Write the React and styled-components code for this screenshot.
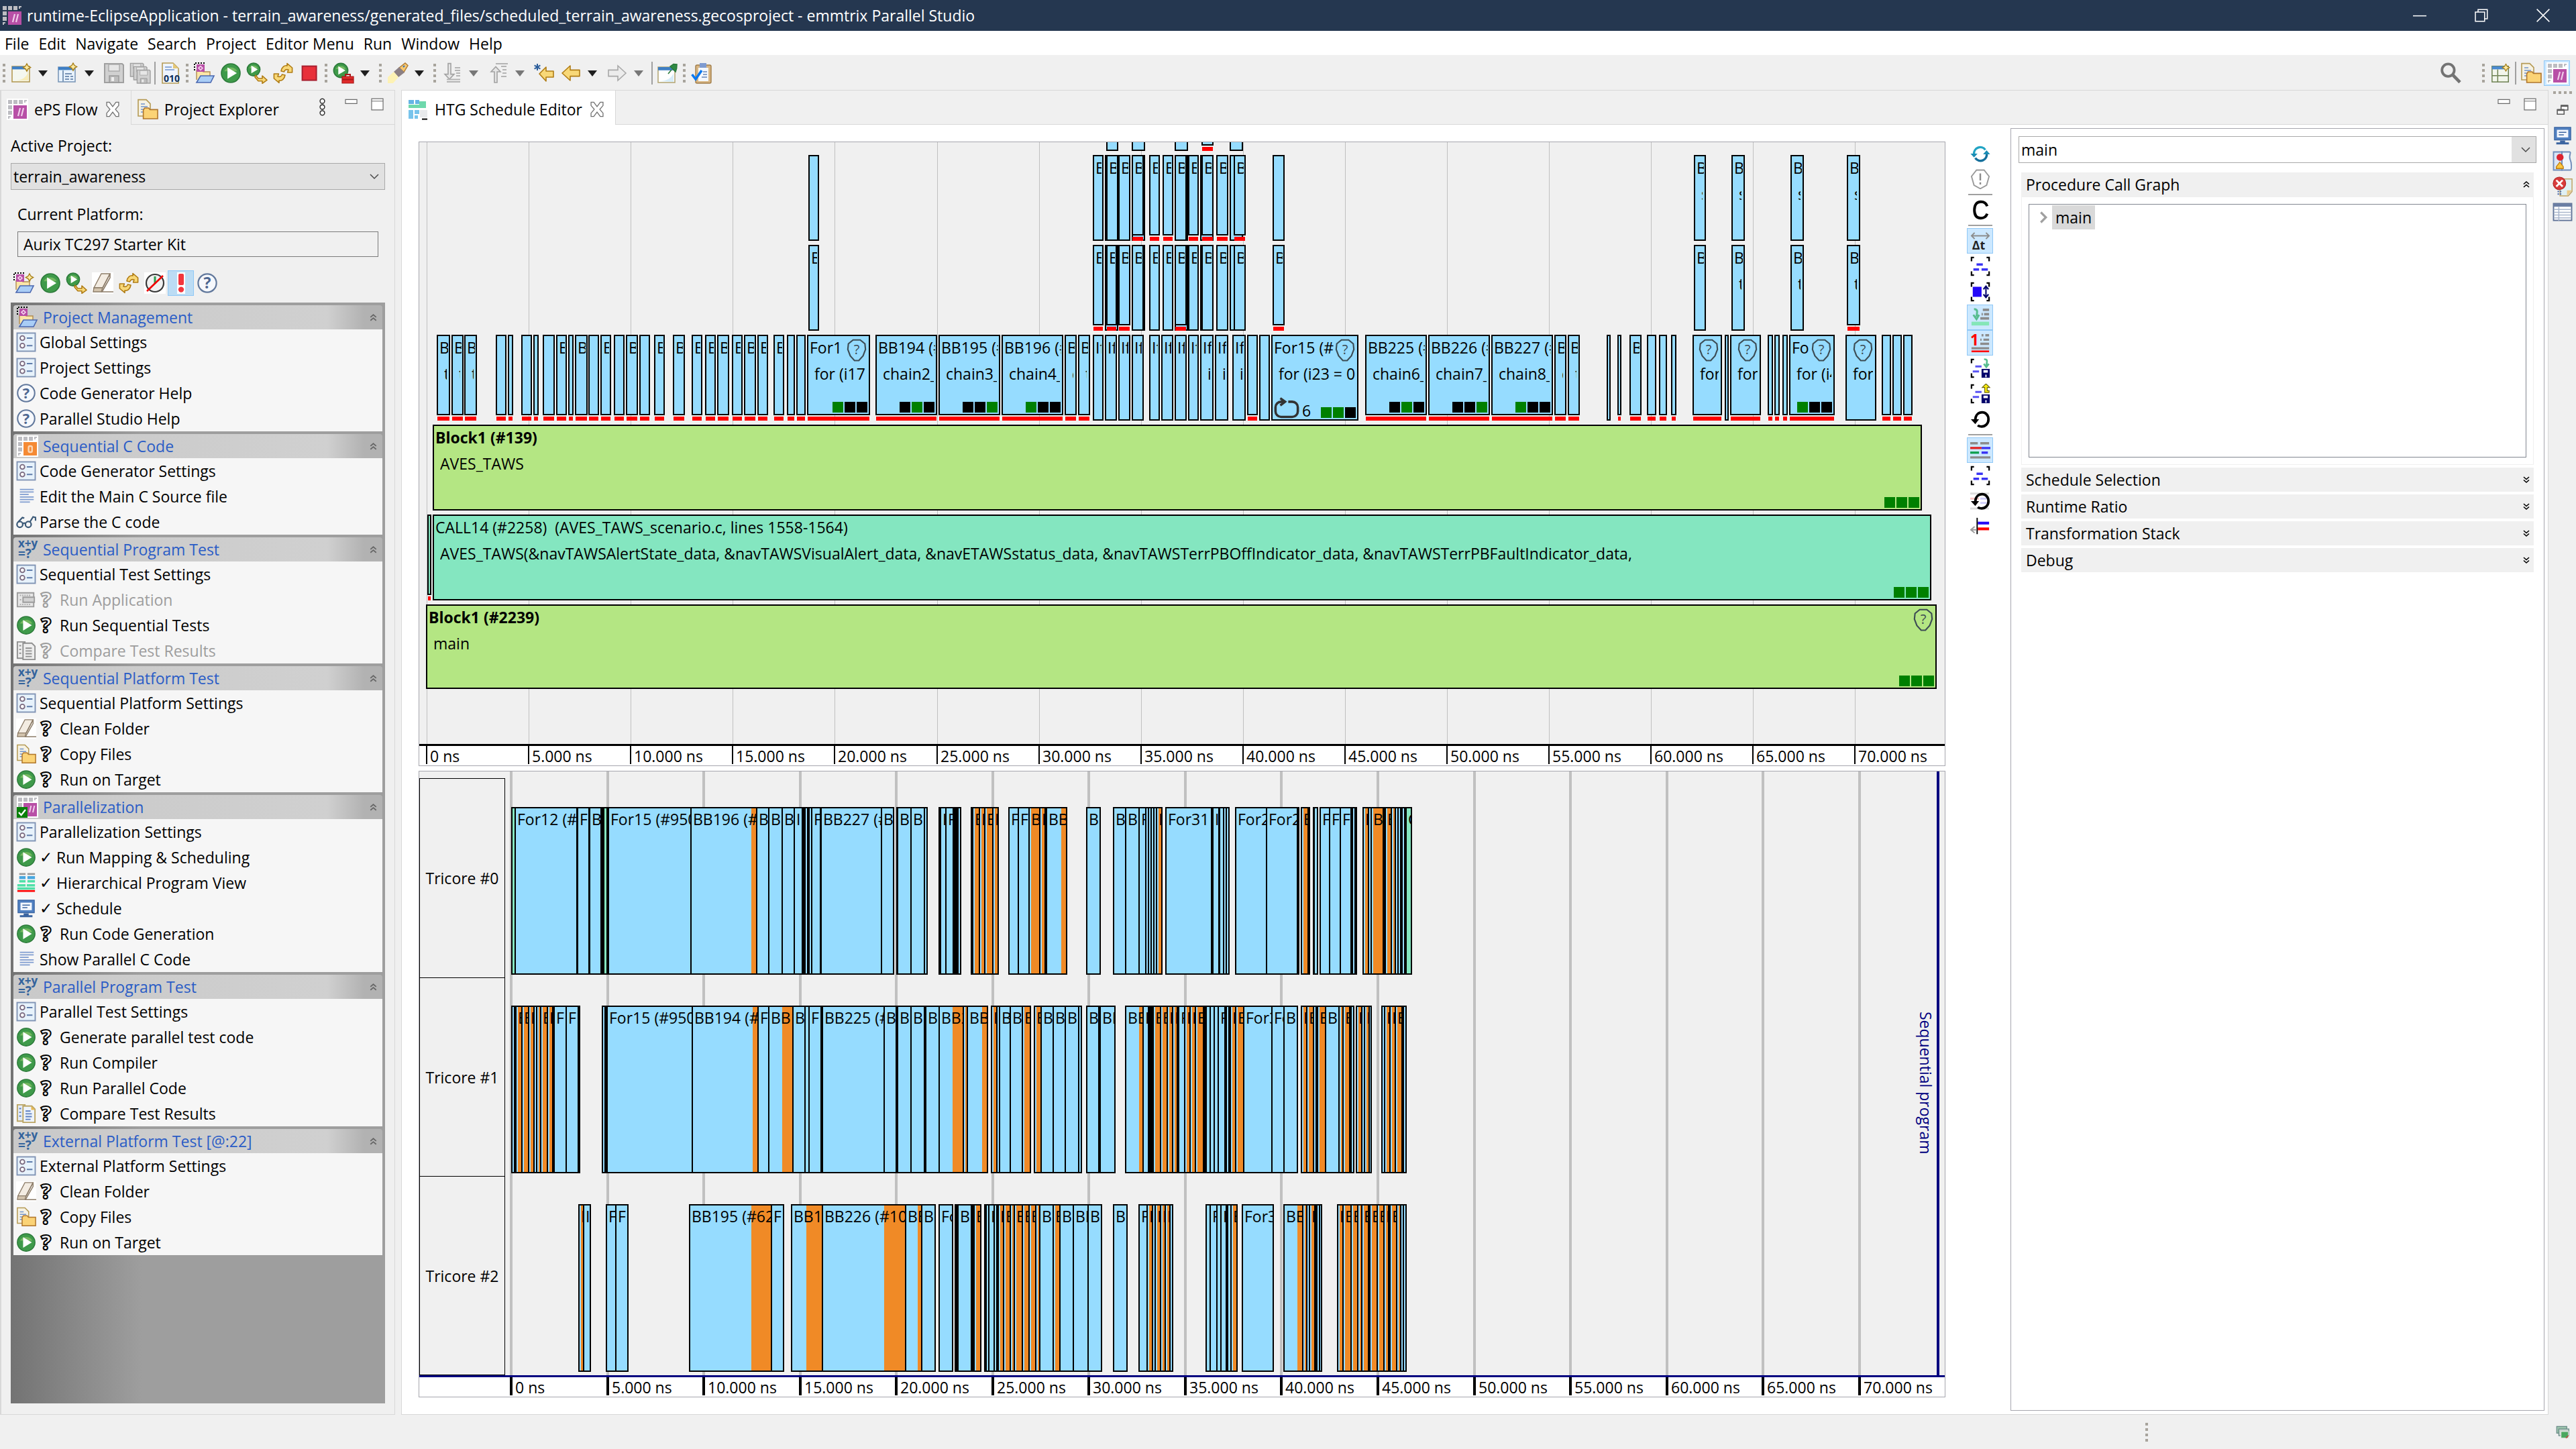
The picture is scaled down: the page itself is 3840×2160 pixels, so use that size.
import { useState } from "react";
import styled, { createGlobalStyle, css } from "styled-components";

const GlobalStyle = createGlobalStyle`
  *, *::before { box-sizing: border-box; }
  body {
    margin: 0;
    background: #f0f0f0;
    color: #000;
    font-family: "Open Sans", "Noto Sans", sans-serif;
    font-size: 23px;
    line-height: 32px;
  }
  button, input, select { font: inherit; color: inherit; }
  button { margin: 0; padding: 0; border: 0; background: none; text-align: left; }
  svg { display: block; flex: none; }
`;

/* ---------- icons, all drawn on a 16 x 16 grid ---------- */

const Spark = ({ x = 11, y = 0 }) => (
  <path
    d={`M${x + 2.5} ${y}l1 1.8 1.8 1-1.8 1-1 1.8-1-1.8-1.8-1 1.8-1z`}
    fill="#fbe9a0"
    stroke="#a8801c"
    strokeWidth=".7"
  />
);

const Brand = ({ color = "#b84fa6", back = "#fff" }) => (
  <>
    <rect width="16" height="16" fill={back} />
    <path d="M1 1h3v3H1zM5 1h3v3H5zM9 1h3v3H9zM13 1h2v1h-1v1h-1zM1 5h3v3H1zM1 9h3v3H1zM1 13h2v1H2v1H1z" fill="#bdbdc2" />
    <rect x="5" y="5" width="10" height="10" fill={color} />
  </>
);

const Play = ({ r = 7, cx = 8, cy = 8 }) => (
  <>
    <circle cx={cx} cy={cy} r={r} fill="#3f9a4a" stroke="#2c7a3a" strokeWidth=".8" />
    <path d={`M${cx - r * 0.7} ${cy - r * 0.2}a${r * 0.8} ${r * 0.8} 0 0 1 ${r * 1.4} 0z`} fill="#8cc46a" opacity=".7" />
    <path d={`M${cx - r * 0.35} ${cy - r * 0.6}L${cx + r * 0.65} ${cy}L${cx - r * 0.35} ${cy + r * 0.6}z`} fill="#fff" />
  </>
);

const Gold = ({ d }) => <path d={d} fill="#f8d878" stroke="#b07c14" strokeWidth=".8" strokeLinejoin="round" />;

const Disk = ({ x = 0, y = 0, s = 1 }) => (
  <g transform={`translate(${x} ${y}) scale(${s})`}>
    <path d="M1 1h13l1 1v13H1z" fill="#d0d0d0" stroke="#a0a0a0" />
    <path d="M4 1.5h8v5H4z" fill="#e6e6e6" stroke="#aaa" strokeWidth=".7" />
    <path d="M4.5 10h7v5h-7z" fill="#bdbdbd" stroke="#999" strokeWidth=".7" />
    <path d="M6 11h2v3H6z" fill="#eee" />
  </g>
);

const Folder = () => (
  <>
    <path d="M2 13V6h4l1 1h5v3" fill="#fbe6a8" stroke="#b08a50" strokeWidth=".7" />
    <path d="M2 15l3-5h10l-2.5 5z" fill="#a9cdf6" stroke="#4a67b0" strokeWidth=".8" />
  </>
);

const Tile = () => (
  <>
    <path d="M1 .5h8M.5 1v6" stroke="#000" strokeDasharray="1 1" />
    <rect x="2" y="1.5" width="6" height="5.5" fill="#b84fa6" />
    <path d="M3.5 4.2L5 2.8l1.5 1.4L5 5.7z" fill="none" stroke="#f4d0ee" strokeWidth=".8" />
  </>
);

const Brackets = () => (
  <path d="M1 4V1h2M13 1h2v3M1 12v3h2M13 15h2v-3" fill="none" stroke="#000" strokeWidth="1.2" />
);

const SmallDisk = () => (
  <>
    <path d="M9 8.5h6.5v7H9z" fill="#00006a" />
    <path d="M10.5 9.5H14v2h-3.5zM12 13h1v2h-1z" fill="#fff" />
  </>
);

const ICONS = {
  brand: (
    <>
      <Brand />
      <path d="M8.5 13L10 7M11 13l1.5-6" stroke="#f0cdea" strokeWidth="1.1" />
    </>
  ),
  brandDark: (
    <>
      <Brand back="none" />
      <path d="M8.5 13L10 7M11 13l1.5-6" stroke="#f0cdea" strokeWidth="1.1" />
    </>
  ),
  newWizard: (
    <>
      <rect x="1" y="3" width="13" height="11.5" fill="#f4f7ef" stroke="#b59a54" strokeWidth=".8" />
      <rect x="1" y="3" width="12" height="2.2" fill="#3f7fc4" />
      <path d="M3 13.5c5 0 9-2 10-7v7z" fill="#f7ecb8" />
      <Spark x={9.5} y={1} />
    </>
  ),
  newView: (
    <>
      <rect x="1" y="3.5" width="12.5" height="11" fill="#e8f2fc" stroke="#7c98b8" strokeWidth=".8" />
      <rect x="1" y="3.5" width="12" height="2.2" fill="#3f7fc4" />
      <path d="M4.5 6v8.5" stroke="#7c98b8" />
      <path d="M6 8.5h5M6 10.5h3M10 10.5h2M6 12.5h3M10 12.5h2" stroke="#50719c" strokeWidth=".8" />
      <Spark x={9.5} y={0.5} />
    </>
  ),
  save: <Disk />,
  saveAll: (
    <>
      <Disk s={0.7} />
      <Disk x={2.5} y={2.5} s={0.7} />
      <Disk x={5} y={5} s={0.7} />
    </>
  ),
  binary: (
    <>
      <path d="M2 .5h8l4 4v11H2z" fill="#eef4fc" stroke="#b59a54" strokeWidth=".8" />
      <path d="M10 .5v4h4z" fill="#e4c878" />
      <path d="M4 3.5h5M4 5.5h7" stroke="#7094cc" strokeWidth=".8" />
      <text x="3" y="14.5" fontSize="7" fontWeight="700" fill="#10305c">010</text>
    </>
  ),
  projectOpen: (
    <>
      <Folder />
      <Tile />
    </>
  ),
  projectNew: (
    <>
      <Folder />
      <Tile />
      <Spark x={9.5} y={1} />
    </>
  ),
  play: <Play />,
  playNext: (
    <>
      <Play r={4.8} cx={5.5} cy={5.3} />
      <Gold d="M7 9.5L9 12h3v-2l3.5 3.2-3.5 2.5v-1.8H9L6.5 11z" />
    </>
  ),
  sync: (
    <>
      <Gold d="M6.5 6.5C7 3.5 9 2 11 2.5V.8L14.8 4v3.5h-3.5L12 5.5C10.5 5 9 5.5 8.8 7z" />
      <Gold d="M9.5 9.5c-.5 3-2.5 4.5-4.5 4v1.7L1.2 12V8.5h3.5L4 10.5c1.5.5 3 0 3.200-1.500z" />
    </>
  ),
  stop: <rect x="2.8" y="2.8" width="10.5" height="10.5" fill="#e8303a" stroke="#a82030" />,
  playTool: (
    <>
      <Play r={5.3} cx={6} cy={6} />
      <path d="M7 10.5h8.5v5H7z" fill="#e02a2a" stroke="#a81818" strokeWidth=".6" />
      <path d="M9.5 10.5V9H13v1.5M7 12.8h8.5" fill="none" stroke="#a81818" />
    </>
  ),
  torch: (
    <>
      <path d="M9 4L13.5.5l2 1.8-3 5z" fill="#f7c870" stroke="#b07c34" strokeWidth=".7" />
      <path d="M5 7l4-3.5 4 4L8.500 11z" fill="#8c8084" />
      <path d="M.5 15.5V11L5 7l3.5 4-4 4.500z" fill="#fdf2b4" />
      <path d="M12 3.5l1-1" stroke="#2f6fc0" />
    </>
  ),
  nextMark: (
    <>
      <path d="M5 .8h2v8h2.5L6 12.5 2.5 8.8H5z" fill="#e6e6e6" stroke="#a2a2a2" strokeWidth=".8" />
      <path d="M10 4h4M10 6h4M11 8h3M11 10h3M4 14.5h10M4 12.8h10" stroke="#b4b4b4" />
    </>
  ),
  prevMark: (
    <>
      <path d="M5 15V7H2.5L6 3.2 9.5 7H7v8z" fill="#e6e6e6" stroke="#a2a2a2" strokeWidth=".8" />
      <path d="M6 1h9M10 3h4M11 5.5h3M11 8h3M10 10.5h4" stroke="#b4b4b4" />
    </>
  ),
  backStar: (
    <>
      <Gold d="M4 8.5l5-5v3h5.5V11H9v3z" />
      <path d="M2.5 1v5M.3 2.2l4.4 2.6M4.7 2.2L.3 4.8" stroke="#2d5f9c" />
    </>
  ),
  back: <Gold d="M1.5 8l6-5.5v3.2h7v4.6h-7v3.2z" />,
  forward: <path d="M14.5 8l-6-5.5v3.2h-7v4.6h7v3.2z" fill="#ececec" stroke="#a8a8a8" strokeWidth=".8" />,
  pin: (
    <>
      <rect x="1" y="3.5" width="12.5" height="11.5" fill="#fff" stroke="#b5a878" strokeWidth=".8" />
      <rect x="1" y="3.5" width="12.5" height="2.4" fill="#3f7fc4" />
      <path d="M2 14c5 0 9-2 10.5-6v6.5z" fill="#d6ecf8" />
      <path d="M8.5 8.5l2.5-3M10 3l4 4 .8-2.5L15 1.5l-2.5-.2z" fill="#2f8a44" stroke="#2a7a3a" strokeWidth=".8" />
    </>
  ),
  clipboard: (
    <>
      <rect x="3.5" y="2" width="11.5" height="13.5" rx="1" fill="#d8b684" stroke="#a07c48" strokeWidth=".7" />
      <path d="M5.5 4H13v10H5.5z" fill="#f4f8fe" />
      <rect x="6.5" y=".5" width="5" height="3.5" fill="#7f9bd0" />
      <path d="M9 7h3M9 9h3M8 11h4" stroke="#6484b8" strokeWidth=".8" />
      <path d="M.8 9l2.7 3.5L8 6" fill="none" stroke="#0a78f0" strokeWidth="1.8" />
    </>
  ),
  copyFiles: (
    <>
      <path d="M1 .8h6l3 3V13H1z" fill="#f6f2e4" stroke="#b59a54" strokeWidth=".8" />
      <path d="M3 4h3M3 6h5M3 8h3M3 10h2" stroke="#7094cc" strokeWidth=".8" />
      <path d="M4.8 8.5l1-1.5h3l1 1.2h5.7V15H4.8z" fill="#fbd376" stroke="#b0762c" strokeWidth=".8" />
    </>
  ),
  editor: (
    <>
      <path d="M1 1h4v3H1zM6 1h3v3H6z" fill="#64b4e4" />
      <path d="M1 4.5h13V7H1zM9 2h5v3H9z" fill="#6ed8ac" />
      <path d="M1 8.5h3.5V15H1zM5.5 8.5H9v3H5.5zM5.5 12.5H8V15H5.5z" fill="#78c4ec" />
      <path d="M9.5 8.5H15V14H9.5z" fill="#e8eaec" />
      <path d="M11 15.3h4" stroke="#000" />
    </>
  ),
  eraser: (
    <>
      <rect width="16" height="16" fill="#fff" />
      <path d="M7 1h6.5L8 11.5H1.5z" fill="#f3ece2" stroke="#8c7c68" strokeWidth=".7" />
      <path d="M1.5 11.5H8l-1 3H1z" fill="#d3c4ae" stroke="#8c7c68" strokeWidth=".7" />
      <path d="M8 11.5L13.5 1v3l-6 10.5H16" fill="none" stroke="#8c7c68" strokeWidth=".8" />
    </>
  ),
  noTimer: (
    <>
      <rect width="16" height="16" fill="#fff" />
      <circle cx="8" cy="8" r="6.5" fill="#f0f0f0" stroke="#383838" strokeWidth="1.1" />
      <path d="M8 3v5.5" stroke="#2f9c50" strokeWidth="1.5" />
      <path d="M2 14L14 2.5" stroke="#f00000" strokeWidth="1.3" />
    </>
  ),
  alert: (
    <>
      <rect x="5" width="6" height="16" fill="#fff" />
      <rect x="6" y="1" width="4" height="8.5" rx="1" fill="#f2363e" />
      <circle cx="8" cy="12.8" r="2.1" fill="#f2363e" />
    </>
  ),
  help: (
    <>
      <circle cx="8" cy="8" r="6.8" fill="#f6f8fc" stroke="#61789c" strokeWidth="1.1" />
      <text x="8" y="12.2" textAnchor="middle" fontSize="11.5" fontWeight="700" fill="#4d6690">?</text>
    </>
  ),
  settings: (
    <>
      <rect x=".8" y=".8" width="14.4" height="14.4" fill="#e7f2fb" stroke="#7f93b4" />
      <circle cx="5" cy="4.8" r="1.8" fill="#fff" stroke="#7a6a80" />
      <circle cx="5" cy="10.8" r="1.8" fill="#fff" stroke="#7a6a80" />
      <path d="M8.5 4.8H13M8.5 10.8H13" stroke="#5f7cab" />
    </>
  ),
  codeC: (
    <>
      <Brand color="#f58a34" />
      <rect x="8.8" y="8" width="2.6" height="4.5" rx="1" fill="none" stroke="#fbd6b4" strokeWidth="1.2" />
    </>
  ),
  source: <path d="M3 2.5h11M3 4.5h11M3 6.5h7M3 8.5h11M3 10.5h11M3 12.5h8" stroke="#7f9cd0" strokeWidth=".9" />,
  glasses: (
    <g fill="none" stroke="#3c5a78" strokeWidth="1.2">
      <circle cx="3" cy="10" r="2.3" />
      <circle cx="9.7" cy="10" r="2.3" />
      <path d="M5.400 9.500c.5-.8 1.500-.8 2 0M1.500 8.300L5 4.500l1.500.5M11 8l2.500-4 2 .5V7" />
    </g>
  ),
  formula: (
    <>
      <text x="1" y="6.5" fontSize="8.5" fontWeight="700" fill="#33639c">x+y</text>
      <text x="1" y="14.5" fontSize="9.5" fontWeight="700" fill="#33639c">=?</text>
    </>
  ),
  runOff: (
    <>
      <path d="M1 2.5h13v11H1z" fill="#e6e6e6" stroke="#9c9c9c" />
      <path d="M5.5 6h9v4h-9z" fill="#d2d2d2" stroke="#9c9c9c" />
      <path d="M3 4.5h9M3 8h1M3 11.8h9" stroke="#aaa" strokeDasharray="1 .8" />
    </>
  ),
  compareOff: (
    <>
      <path d="M1 1h6v13H1z" fill="#eee" stroke="#8f8f8f" />
      <path d="M5.5 2h7L15 4.5V15H5.5z" fill="#eee" stroke="#8f8f8f" />
      <path d="M7.5 6h5M7.5 8.2h5M7.5 10.4h5M7.5 12.6h5M2.5 4H4M2.5 7H4M2.5 10H4" stroke="#8f8f8f" />
    </>
  ),
  compare: (
    <>
      <path d="M1 1h6v13H1z" fill="#e4ecf8" stroke="#bba564" />
      <path d="M5.5 2h7L15 4.5V15H5.5z" fill="#eef4fc" stroke="#bba564" />
      <path d="M12 2v3h3z" fill="#e8b850" />
      <path d="M7.5 6h4M7.5 8.2h5M7.5 10.4h5M7.5 12.6h4M2.5 4H4M2.5 7H4M2.5 10H4" stroke="#5c7fc0" />
    </>
  ),
  parallel: (
    <>
      <Brand />
      <path d="M9.5 12l1.2-5M12 12l1.2-5" stroke="#f0cdea" />
      <rect y="8" width="8" height="8" fill="#0a800a" />
      <path d="M1.5 12l1.8 2 3.200-4" fill="none" stroke="#fff" strokeWidth="1.2" />
    </>
  ),
  hierarchy: (
    <>
      <path d="M2.5 1h5M9 1h6" stroke="#9a9a9a" strokeWidth="1.5" />
      <path d="M2.5 3.8h5M9 3.8h6" stroke="#4aa8e0" strokeWidth="2.4" />
      <path d="M2.5 6.8h5M9 6.8h6M1 10h6.5M8.5 10H15M1 12.5h14" stroke="#4fe0a8" strokeWidth="1.8" />
      <path d="M1 14.5h14" stroke="#f00" strokeWidth="1.4" />
    </>
  ),
  monitor: (
    <>
      <path d="M1.5 1.5h13v10h-13z" fill="#4f7fc0" stroke="#3a64a0" strokeWidth=".6" />
      <path d="M3.5 3.5h9v6h-9z" fill="#f4f8fe" />
      <path d="M5 5.5h6M5 7.5h4" stroke="#3a64a0" strokeWidth=".8" />
      <path d="M6 12h4v1.5h3V15H3v-1.5h3z" fill="#3a64a0" />
    </>
  ),
  refresh: (
    <>
      <path d="M3 8.5A5 5 0 0 1 12 5" fill="none" stroke="#22a4c4" strokeWidth="1.8" />
      <path d="M13 7.5A5 5 0 0 1 4 11.5" fill="none" stroke="#16709c" strokeWidth="1.8" />
      <path d="M.2 8h5.600L3 11zM10.2 8.5h5.600L13 5.300z" fill="#1a8cb4" />
    </>
  ),
  warning: (
    <>
      <path d="M5 .8h6l4 5-2 7-5 2.8-5-2.8-2-7z" fill="#fff" stroke="#9a9a9a" />
      <path d="M8 3.5V9M8 10.5v1.8" stroke="#8c8c8c" strokeWidth="1.3" />
    </>
  ),
  letterC: (
    <path
      d="M13.5 5c-1-2.7-2.7-3.5-5-3.5C5 1.5 3.3 4 3.3 8S5 14.5 8.5 14.5c2.3 0 4-.8 5-3.5"
      fill="none"
      stroke="#000"
      strokeWidth="2.1"
    />
  ),
  deltaT: (
    <>
      <path d="M1 4h14M3.5 1.5L1 4l2.5 2.5M12.5 1.5L15 4l-2.5 2.5" fill="none" stroke="#8c8c8c" />
      <text x="1.5" y="14.8" fontSize="9.5" fontWeight="700" fill="#222">Δt</text>
    </>
  ),
  fit: (
    <>
      <Brackets />
      <path d="M5 6.5h5M2.5 10.5H7M9 10.5h5" stroke="#3a34f4" strokeWidth="1.8" />
    </>
  ),
  fitHeight: (
    <>
      <Brackets />
      <rect x="2" y="4" width="7" height="8" fill="#2408f8" />
      <path d="M12.5 4v8M10.5 6l2-2.5 2 2.5M10.5 10l2 2.5 2-2.5" fill="none" stroke="#00006a" strokeWidth="1.1" />
    </>
  ),
  callLevel: (
    <>
      <path d="M3 1.5c4 0 2 4 2 6M2.5 6L5 9.5 7 6" fill="none" stroke="#58bd90" strokeWidth="1.6" />
      <path d="M10 2h5M9 5.5h1M11 5.5h4M8 8.8h7" stroke="#8c8c8c" strokeWidth="2" />
      <path d="M1 13h14" stroke="#84e6b8" strokeWidth="3" />
    </>
  ),
  oneLevel: (
    <>
      <text x="0" y="10" fontSize="12" fontWeight="700" fill="#f00">1</text>
      <path d="M9 2h1.5M12 2h3M8 5.5h1M10.5 5.5H15M8 8.8h7M1 12.3h14" stroke="#8c8c8c" strokeWidth="1.8" />
      <path d="M1 14.8h14" stroke="#f00" strokeWidth="1.4" />
    </>
  ),
  saveDown: (
    <>
      <path d="M1 4V1h2M1 12v3h2" fill="none" stroke="#000" strokeWidth="1.2" />
      <path d="M4 6.5h5M2 10.5h5" stroke="#5a54f4" strokeWidth="1.6" />
      <path d="M11 .8c4 0 1.5 3 2 5M10.8 4.5l2 2.5 2-2.5" fill="none" stroke="#58bd90" strokeWidth="1.4" />
      <SmallDisk />
    </>
  ),
  saveUp: (
    <>
      <path d="M1 4V1h2M1 12v3h2" fill="none" stroke="#000" strokeWidth="1.2" />
      <path d="M4 6.5h5M2 10.5h5" stroke="#5a54f4" strokeWidth="1.6" />
      <path d="M12.5 0l3 3h-2v2.5H15V7h-3.5V3h-2z" fill="#f8ec10" stroke="#6a6410" strokeWidth=".6" />
      <SmallDisk />
    </>
  ),
  undo: (
    <>
      <path
        d="M4 9c0-5 3-6.5 5.5-6.5s5 2 5 5.500-2.500 5.800-5.500 5.800c-1.500 0-2.500-.5-3-1"
        fill="none"
        stroke="#000"
        strokeWidth="2"
      />
      <path d="M.5 8H7l-3 3.8z" />
    </>
  ),
  tracks: (
    <>
      <path d="M0 2.5h6M8 2.5h7M0 13.8h16" stroke="#8c8c8c" strokeWidth="1.8" />
      <path d="M0 6.3h9" stroke="#e02828" strokeWidth="1.8" />
      <path d="M9 6.3h7M9 10h5" stroke="#3a34f4" strokeWidth="1.8" />
      <path d="M0 10h7" stroke="#10a050" strokeWidth="1.8" />
    </>
  ),
  undoTracks: (
    <>
      <path d="M0 2h15M0 13.8h15" stroke="#ddd" strokeWidth="1.6" />
      <path d="M0 6h7" stroke="#f8c4c4" strokeWidth="1.6" />
      <path d="M8 6h6M8 9.5h5" stroke="#cfcdfa" strokeWidth="1.6" />
      <path
        d="M4 9c0-5 3-6.5 5.5-6.5s5 2 5 5.500-2.500 5.800-5.500 5.800c-1.500 0-2.500-.5-3-1"
        fill="none"
        stroke="#000"
        strokeWidth="2"
      />
      <path d="M.5 8H7l-3 3.8z" />
    </>
  ),
  align: (
    <>
      <path d="M6 5.2h9" stroke="#2408f8" strokeWidth="2.2" />
      <path d="M6 9.8h9" stroke="#f00" strokeWidth="2.2" />
      <path d="M5.5 1v13" stroke="#000" />
      <path d="M5 10.5H1.5M3.5 8l-3 2.5 3 2.5" fill="none" stroke="#9a9a9a" />
    </>
  ),
  search: (
    <>
      <circle cx="6.2" cy="5.8" r="4.6" fill="none" stroke="#737373" strokeWidth="1.9" />
      <path d="M9.5 9.2l5.5 5.6" stroke="#737373" strokeWidth="2.4" />
    </>
  ),
  perspective: (
    <>
      <rect x="1" y="2.5" width="13" height="12.5" fill="#f3f6ec" stroke="#6c8050" strokeWidth=".8" />
      <rect x="1" y="2.5" width="11" height="2.5" fill="#4a8ad0" />
      <path d="M5.5 5v10M5.5 10H14M1 10h4" stroke="#6c8050" strokeWidth=".8" />
      <Spark x={9.5} y={0.8} />
    </>
  ),
  restore: (
    <>
      <path d="M6 2h9v6H6z" fill="#fff" stroke="#5c5c5c" strokeWidth="1.4" />
      <path d="M6 2.5h9" stroke="#5c5c5c" strokeWidth="2.4" />
      <path d="M1 7.500h9v6H1z" fill="#fff" stroke="#5c5c5c" strokeWidth="1.4" />
      <path d="M1 8h9" stroke="#5c5c5c" strokeWidth="2.4" />
    </>
  ),
  marks: (
    <>
      <path d="M.8.8h6.700v14.400H.8z" fill="#dbe6f6" stroke="#6f8cba" />
      <path d="M7.5.8h6c2 0-1 3 .5 6s1 8 .5 8.400h-7z" fill="#eef4fc" stroke="#6f8cba" />
      <circle cx="6" cy="5" r="2.8" fill="#dc2430" />
      <path d="M3 14v-1.5L5.8 9l2.8 3.5V14z" fill="#fbc840" stroke="#c07c10" strokeWidth=".7" />
    </>
  ),
  problems: (
    <>
      <path d="M6 2h9.5v10l-3 3.5H6z" fill="#dff0f4" stroke="#c0a464" strokeWidth=".8" />
      <path d="M15.5 11h-4v4.5z" fill="#eccb88" />
      <circle cx="5.5" cy="5.5" r="5" fill="#d83c3c" stroke="#b02424" strokeWidth=".6" />
      <path d="M3 3l5 5M8 3L3 8" stroke="#fff" strokeWidth="1.5" />
      <path d="M4 12h3M4 14h3" stroke="#4a6aa8" strokeDasharray="1.2 .6" />
    </>
  ),
  table: (
    <>
      <rect x=".8" y="1.3" width="14.4" height="13.4" fill="#fff" stroke="#5f7296" />
      <rect x=".8" y="1.3" width="14.4" height="2.5" fill="#6b7fa4" />
      <path d="M1 6h14M1 8.2h14M1 10.4h14M1 12.6h14M5 4v11" stroke="#a9b6cc" strokeWidth=".8" />
    </>
  ),
  layers: (
    <>
      <path d="M1 1h12v8H1z" fill="#9cc4ac" stroke="#6a8c88" />
      <path d="M3.5 4h12v8h-12z" fill="#c6d4cc" stroke="#6a8c88" />
      <path d="M6 7h9v8H6z" fill="#4ca860" stroke="#e8e8e8" />
      <path d="M12 15l3-3" stroke="#d04040" />
    </>
  ),
  close: (
    <path
      d="M2.500 1.500h2.500l3 4 3-4h2.500v3L10.500 8l3 3.500v3H11l-3-4-3 4H2.500v-3L5.500 8l-3-3.500z"
      fill="#fff"
      stroke="#707070"
      strokeWidth=".8"
    />
  ),
  minimize: <path d="M.8 2h14.400v5H.8z" fill="#fff" stroke="#6c6c6c" />,
  maximize: <path d="M.8 1h14.400v14H.8zM.8 4h14.400" fill="#fff" stroke="#6c6c6c" />,
  more: (
    <g fill="#fff" stroke="#333" strokeWidth=".9">
      <circle cx="8" cy="2.8" r="2" />
      <circle cx="8" cy="8" r="2" />
      <circle cx="8" cy="13.2" r="2" />
    </g>
  ),
  chevron: <path d="M2 5l6 6 6-6" fill="none" stroke="#4a4a4a" strokeWidth="1.5" />,
  chevronRight: <path d="M5 2l6 6-6 6" fill="none" stroke="#a0a0a0" strokeWidth="2.6" />,
  foldUp: <path d="M4 7.5L8 4l4 3.5M4 12l4-3.5 4 3.5" fill="none" stroke="currentColor" strokeWidth="1.6" />,
  foldDown: <path d="M4 4l4 3.5L12 4M4 8.5L8 12l4-3.5" fill="none" stroke="currentColor" strokeWidth="1.6" />,
  winMin: <path d="M0 8.5h16" stroke="#fff" strokeWidth="1.2" />,
  winRestore: <path d="M.8 4h11v11h-11zM4 4V1h11v11h-3" fill="none" stroke="#fff" strokeWidth="1.2" />,
  winClose: <path d="M.5.5l15 15M15.5.5l-15 15" stroke="#fff" strokeWidth="1.2" />,
  loop: (
    <path
      d="M6 5H4.500A3.500 3.500 0 0 0 1 8.500V11A3.500 3.500 0 0 0 4.500 14.500h7A3.500 3.500 0 0 0 15 11V8.500A3.500 3.500 0 0 0 11.500 5H9M4 2.800L7 5 4 7.300"
      fill="none"
      stroke="#333"
      strokeWidth="1.5"
    />
  ),
  unknown: (
    <>
      <path
        d="M5.500.8h5l3.300 2.700.4 4-1.700 4.500L9.500 15.300h-3L3.500 12 1.800 7.500l.4-4z"
        fill="none"
        stroke="#3c4c54"
        strokeWidth="1"
      />
      <text x="8" y="11" textAnchor="middle" fontSize="9.5" fill="#3c4c54">?</text>
    </>
  ),
};

function Icon({ name, size = 32, height }) {
  return (
    <svg width={size} height={height || size} viewBox="0 0 16 16" aria-hidden="true">
      {ICONS[name]}
    </svg>
  );
}

/* ---------- window frame ---------- */

const Window = styled.div`
  min-height: 100vh;
  display: flex;
  flex-direction: column;
`;

const TitleBar = styled.header`
  display: flex;
  align-items: center;
  gap: 6px;
  height: 46px;
  padding: 0 39px 0 2px;
  background: #253750;
  color: #fff;
`;

const Title = styled.h1`
  flex: 1;
  margin: 0;
  font-size: 23px;
  font-weight: 400;
`;

const WindowButton = styled.button`
  width: 86px;
  display: flex;
  justify-content: flex-end;
`;

const MenuBar = styled.nav`
  display: flex;
  gap: 14px;
  height: 36px;
  padding: 3px 7px 1px;
  background: #fff;
`;

const ToolBar = styled.div`
  display: flex;
  align-items: center;
  height: 52px;
  padding-top: 2px;
  padding-right: 9px;
`;

const ToolButton = styled.button`
  width: 39px;
  height: 38px;
  display: flex;
  align-items: center;
  justify-content: center;
  border: 1px solid ${(p) => (p.$on ? "#90c8f6" : "transparent")};
  background: ${(p) => (p.$on ? p.$tint || "#cce8ff" : "none")};
`;

const Caret = styled.button`
  width: 30px;
  padding-left: 6px;
  &::before {
    content: "";
    display: block;
    width: 14px;
    border: 7px solid transparent;
    border-top: 9px solid ${(p) => (p.$off ? "#777" : "#1e1e1e")};
    border-bottom: 0;
  }
`;

const Grip = styled.span`
  width: 4px;
  height: 28px;
  margin: 0 4px;
  background: repeating-linear-gradient(#a8a49c 0 4px, transparent 4px 8px);
`;

const Divider = styled.span`
  width: 2px;
  height: 34px;
  margin: 0 2px;
  background: #a0a0a0;
`;

const Spacer = styled.span`
  flex: 1;
`;

const SearchButton = styled(ToolButton)`
  margin-right: 24px;
`;

const Body = styled.div`
  flex: 1;
  display: flex;
`;

const StatusBar = styled.footer`
  display: flex;
  align-items: center;
  justify-content: flex-end;
  height: 53px;
  padding-right: 10px;
  border-bottom: 2px solid #4c4c4c;
  gap: 604px;
`;

/* ---------- left view ---------- */

const FlowView = styled.aside`
  width: 589px;
  flex: none;
  display: flex;
  flex-direction: column;
  margin-right: 9px;
  border: 1px solid #d8d8d8;
  border-left-width: 2px;
`;

const TabRow = styled.div`
  display: flex;
  height: 51px;
`;

const Tab = styled.button`
  display: flex;
  align-items: center;
  gap: 9px;
  padding: 5px 14px 0 8px;
  background: ${(p) => p.$bg || "none"};
`;

const TabRest = styled.div`
  flex: 1;
  display: flex;
  justify-content: ${(p) => (p.$right ? "flex-end" : "space-between")};
  border-bottom: 1px solid #d8d8d8;
  border-left: 1px solid #d8d8d8;
  background: #f0f0f0;
`;

const ViewButtons = styled.div`
  display: flex;
  align-items: flex-start;
  gap: 20px;
  padding: 11px ${(p) => p.$end || 16}px 0 0;
`;

const FlowForm = styled.form`
  flex: 1;
  display: flex;
  flex-direction: column;
  padding: 15px 14px 16px;
`;

const FieldLabel = styled.label`
  display: block;
  height: 42px;
  ${(p) => p.$indent && "margin-top: 20px; padding-left: 10px;"}
`;

const SelectBox = styled.div`
  display: grid;
  align-items: center;
  > * { grid-area: 1 / 1; }
  > svg { justify-self: end; margin-right: 8px; pointer-events: none; }
`;

const Select = styled.select`
  appearance: none;
  width: 100%;
  height: 40px;
  padding: 0 3px;
  border: 1px solid #a9a9a9;
  border-radius: 0;
  background: ${(p) => p.$bg};
`;

const PlatformInput = styled.input`
  height: 38px;
  margin: 0 10px 20px;
  padding: 0 8px;
  border: 1px solid #7a7a7a;
  background: #f0f0f0;
`;

const FlowTools = styled.div`
  display: flex;
  height: 48px;
`;

const FlowList = styled.div`
  flex: 1;
  display: flex;
  flex-direction: column;
  gap: 4px;
  padding: 4px;
  background: linear-gradient(90deg, #737373, #9e9e9e 35%);
`;

const SectionHead = styled.button`
  width: 100%;
  height: 36px;
  display: flex;
  align-items: center;
  gap: 7px;
  padding: 0 5px;
  border-radius: 4px 4px 0 0;
  background: linear-gradient(90deg, #c9c9c9, #d0d0d0 85%, #b2b2b2 95%);
  color: #2a5cc6;
  > svg:last-child { margin-left: auto; color: #666; }
`;

const FlowItem = styled.button`
  width: 100%;
  height: 38px;
  display: flex;
  align-items: center;
  gap: 5px;
  padding: 0 4px;
  background: #f6f6f6;
  color: ${(p) => (p.disabled ? "#9d9d9d" : "#000")};
`;

const Mark = styled.span`
  width: ${(p) => (p.$open ? 25 : 20)}px;
  padding-left: ${(p) => (p.$open ? 2 : 0)}px;
  font-family: ${(p) => (p.$open ? '"Open Sans", sans-serif' : '"DejaVu Sans", sans-serif')};
  ${(p) =>
    p.$open &&
    css`
      color: #f6f6f6;
      font-weight: 800;
      font-size: 30px;
      -webkit-text-stroke: 2px ${p.$off ? "#9d9d9d" : "#000"};
    `}
`;

/* ---------- editor ---------- */

const Editor = styled.main`
  flex: 1;
  min-width: 0;
  display: flex;
  flex-direction: column;
  border: 1px solid #d8d8d8;
  background: #fff;
`;

const EditorBody = styled.div`
  flex: 1;
  display: flex;
  padding: 5px 5px 5px 25px;
`;

const Charts = styled.div`
  flex: 1;
  min-width: 0;
  display: flex;
  flex-direction: column;
  gap: 7px;
  padding: 20px 0;
`;

const ChartFrame = styled.section`
  overflow: hidden;
  border: 1px solid #a6a6ae;
  ${(p) => p.$grow && "flex: 1; display: flex; flex-direction: column;"}
`;

const Canvas = styled.div`
  position: relative;
  overflow: hidden;
  background: #f0f0f0;
  ${(p) => (p.$height ? `height: ${p.$height}px;` : "flex: 1;")}
  border-bottom: 3px solid ${(p) => p.$line};
`;

const GridLine = styled.i`
  position: absolute;
  top: 0;
  bottom: 0;
  width: ${(p) => p.$w}px;
  background: #c0c0c0;
`;

const Axis = styled.div`
  position: relative;
  height: 29px;
  background: #fff;
`;

const Tick = styled.span`
  position: absolute;
  top: 0;
  height: 27px;
  padding-left: 4px;
  border-left: ${(p) => p.$w}px solid #000;
  line-height: 31px;
  white-space: nowrap;
`;

const FILL = { b: "#96dcff", g: "#b4e683", t: "#84e6c0", k: "#000" };

const Block = styled.div`
  position: absolute;
  overflow: hidden;
  border: 2px solid #000;
  background: ${(p) => FILL[p.$fill || "b"]};
  white-space: pre;
`;

const BlockText = styled.p`
  position: relative;
  margin: 0 1px 0 2px;
  overflow: hidden;
  line-height: ${(p) => (p.$sub ? 40 : 34)}px;
  font-weight: ${(p) => (p.$bold ? 700 : 400)};
  ${(p) => p.$sub && "margin: 2px 3px 0 9px;"}
`;

const TaskText = styled.p`
  position: relative;
  margin: 0 0 0 2px;
  line-height: 32px;
`;

const RedBar = styled.i`
  position: absolute;
  height: 6px;
  background: #f00;
`;

const Orange = styled.i`
  position: absolute;
  top: 0;
  bottom: 0;
  background: #f08a26;
`;

const Cores = styled.span`
  position: absolute;
  right: 2px;
  bottom: 2px;
  display: flex;
  gap: 2px;
`;

const Core = styled.i`
  width: 16px;
  height: 16px;
  background: ${(p) => (p.$on ? "#008000" : "#000")};
`;

const Badge = styled.span`
  position: absolute;
  top: 4px;
  right: 1px;
  background: ${(p) => FILL[p.$fill || "b"]};
`;

const LoopCount = styled.span`
  position: absolute;
  left: 2px;
  bottom: 0;
  display: flex;
  align-items: flex-end;
  gap: 4px;
  line-height: 26px;
`;

const CoreLabels = styled.div`
  position: relative;
  width: 128px;
  margin-top: 10px;
  border: 1px solid #000;
`;

const CoreLabel = styled.div`
  height: 296px;
  display: flex;
  align-items: center;
  justify-content: center;
  & + & { border-top: 1px solid #000; }
`;

const Deadline = styled.div`
  position: absolute;
  top: 0;
  bottom: 0;
  right: 8px;
  padding-top: 28px;
  border-right: 4px solid #000080;
  color: #000080;
  text-align: center;
  writing-mode: vertical-rl;
`;

const SideTools = styled.div`
  width: 97px;
  flex: none;
  display: flex;
  flex-direction: column;
  align-items: center;
  padding: 19px 0 0 6px;
`;

const Rule = styled.hr`
  width: 36px;
  height: 2px;
  margin: 3px 0;
  border: 0;
  background: #a0a0a0;
`;

const Inspector = styled.aside`
  width: 796px;
  flex: none;
  padding: 11px;
  border: 1px solid #a6a6ae;
`;

const Groups = styled.div`
  display: flex;
  flex-direction: column;
  gap: 4px;
  padding: 14px 4px;
`;

const GroupHead = styled.button`
  width: 100%;
  height: 36px;
  display: flex;
  align-items: center;
  justify-content: space-between;
  padding: 0 3px 0 7px;
  background: #f0f0f0;
`;

const GroupBody = styled.div`
  padding: 10px;
  border: 1px solid #f0f0f0;
`;

const Tree = styled.div`
  height: 378px;
  padding: 1px 11px;
  border: 1px solid #828790;
`;

const TreeNode = styled.button`
  height: 36px;
  display: flex;
  align-items: center;
  gap: 3px;
  > span { padding: 2px 5px; background: #d9d9d9; }
`;

const Trim = styled.div`
  width: 41px;
  flex: none;
  display: flex;
  flex-direction: column;
  align-items: center;
`;

const TrimGrip = styled.span`
  width: 28px;
  height: 4px;
  margin: 2px 0 5px;
  background: repeating-linear-gradient(90deg, #a8a49c 0 4px, transparent 4px 8px);
`;

/* ---------- data ---------- */

const MENU = ["File", "Edit", "Navigate", "Search", "Project", "Editor Menu", "Run", "Window", "Help"];

// "|" is a grip, "/" a divider, "v" a drop-down arrow, "w" a disabled one
const TOOLS = [
  "|", "newWizard", "v", "newView", "v", "save", "saveAll", "/", "binary",
  "|", "projectOpen", "play", "playNext", "sync", "stop",
  "|", "playTool", "v", "|", "torch", "v",
  "|", "nextMark", "w", "prevMark", "w", "backStar", "back", "v", "forward", "w", "/", "pin",
  "|", "clipboard",
];

const FLOW_TOOLS = ["projectNew", "play", "playNext", "eraser", "sync", "noTimer", "alert", "help"];

// item: [icon, label, mark, disabled]
const FLOW = [
  ["projectOpen", "Project Management", [
    ["settings", "Global Settings"],
    ["settings", "Project Settings"],
    ["help", "Code Generator Help"],
    ["help", "Parallel Studio Help"],
  ]],
  ["codeC", "Sequential C Code", [
    ["settings", "Code Generator Settings"],
    ["source", "Edit the Main C Source file"],
    ["glasses", "Parse the C code"],
  ]],
  ["formula", "Sequential Program Test", [
    ["settings", "Sequential Test Settings"],
    ["runOff", "Run Application", "?", true],
    ["play", "Run Sequential Tests", "?"],
    ["compareOff", "Compare Test Results", "?", true],
  ]],
  ["formula", "Sequential Platform Test", [
    ["settings", "Sequential Platform Settings"],
    ["eraser", "Clean Folder", "?"],
    ["copyFiles", "Copy Files", "?"],
    ["play", "Run on Target", "?"],
  ]],
  ["parallel", "Parallelization", [
    ["settings", "Parallelization Settings"],
    ["play", "Run Mapping & Scheduling", "✓"],
    ["hierarchy", "Hierarchical Program View", "✓"],
    ["monitor", "Schedule", "✓"],
    ["play", "Run Code Generation", "?"],
    ["source", "Show Parallel C Code"],
  ]],
  ["formula", "Parallel Program Test", [
    ["settings", "Parallel Test Settings"],
    ["play", "Generate parallel test code", "?"],
    ["play", "Run Compiler", "?"],
    ["play", "Run Parallel Code", "?"],
    ["compare", "Compare Test Results", "?"],
  ]],
  ["formula", "External Platform Test [@:22]", [
    ["settings", "External Platform Settings"],
    ["eraser", "Clean Folder", "?"],
    ["copyFiles", "Copy Files", "?"],
    ["play", "Run on Target", "?"],
  ]],
];

const SIDE_TOOLS = [
  "refresh", "warning", "-", "letterC", "-", "deltaT*", "fit", "fitHeight", "callLevel*",
  "oneLevel*", "saveDown", "saveUp", "undo", "-", "tracks*", "fit", "undoTracks", "align",
];

const LABELS = Array.from({ length: 15 }, (_, i) => (i ? `${i * 5}.000 ns` : "0 ns"));

// Scroll offset of both canvases.
const X0 = 625;
const LEVEL = [-115, 19, 153, 287];

// [left, right, first line, second line, "r" when a red bar lies under it, cores, badge, loop]
const L3 = [
  [651, 671, "B", "t", "r"], [673, 691, "B", "t", "r"], [692, 711, "B", "t", "r"], [739, 755, "", "", "r"],
  [757, 765, "", "", "r"], [777, 793, "", "", "r"], [795, 803, "", "", "r"], [809, 827, "", "", "r"],
  [829, 845, "B", "", "r"], [847, 855, "", "", "r"], [857, 876, "B", "", "r"], [877, 893, "", "", "r"],
  [895, 911, "B", "", "r"], [915, 931, "", "", "r"], [933, 951, "B", "", "r"], [953, 969, "", "", "r"],
  [975, 991, "B", "", "r"], [1003, 1021, "B", "", "r"], [1031, 1047, "B", "", "r"], [1051, 1067, "B", "", "r"],
  [1069, 1087, "B", "", "r"], [1091, 1107, "B", "", "r"], [1109, 1127, "B", "", "r"], [1129, 1145, "B", "", "r"],
  [1153, 1169, "B", "", "r"], [1173, 1185, "", "", "r"], [1187, 1201, "", "", "r"],
  [1203, 1297, "For1", "for (i17", "r", "100", 1], [1305, 1397, "BB194 (#", "chain2_", "r", "010"],
  [1399, 1491, "BB195 (#", "chain3_", "r", "001"], [1493, 1585, "BB196 (#", "chain4_", "r", "100"],
  [1587, 1605, "B", "c", "r"], [1607, 1625, "B", "t", "r"],
  [1629, 1645, "If", ""], [1647, 1665, "If", ""], [1667, 1685, "If", ""], [1687, 1705, "If", ""],
  [1713, 1729, "If", ""], [1731, 1749, "If", ""], [1751, 1769, "If", ""], [1771, 1787, "If", ""],
  [1789, 1809, "If", "i"], [1811, 1831, "If", "i"], [1837, 1857, "If", "i"],
  [1859, 1875, "", "", "r"], [1877, 1893, "", ""],
  [1895, 2025, "For15 (#", "for (i23 = 0", "", "110", 1, "6"],
  [2035, 2127, "BB225 (#", "chain6_", "r", "010"], [2129, 2221, "BB226 (#", "chain7_", "r", "001"],
  [2223, 2315, "BB227 (#", "chain8_", "r", "100"], [2317, 2335, "B", "c", "r"], [2337, 2355, "B", "t", "r"],
  [2395, 2401, "", ""], [2411, 2417, "", "", "r"], [2429, 2447, "B", "", "r"], [2455, 2469, "", "", "r"],
  [2473, 2485, "", "", "r"], [2491, 2499, "", "", "r"], [2523, 2567, "", "for", "r", "", 1],
  [2571, 2577, "", ""], [2579, 2625, "", "for", "r", "", 1], [2635, 2643, "", "", "r"],
  [2645, 2653, "", "", "r"], [2657, 2665, "", "", "r"], [2667, 2735, "Fo", "for (i4", "r", "100", 1],
  [2751, 2797, "", "for", "", "", 1], [2805, 2819, "", "", "r"], [2821, 2835, "", "", "r"], [2837, 2851, "", "", "r"],
];

const L2 = [
  [1205, 1221, "B", ""], [1629, 1645, "B", "", "r"], [1647, 1667, "", ""], [1649, 1665, "B", "", "r"],
  [1667, 1685, "B", "", "r"], [1687, 1707, "", ""], [1687, 1705, "B", ""], [1713, 1729, "B", ""],
  [1733, 1749, "B", ""], [1751, 1771, "", ""], [1751, 1769, "B", "", "r"], [1771, 1787, "B", ""],
  [1789, 1809, "", ""], [1791, 1809, "B", ""], [1813, 1831, "B", ""], [1833, 1857, "", ""],
  [1839, 1857, "B", ""], [1897, 1915, "B", "", "r"], [2525, 2543, "B", ""], [2581, 2601, "B", "t"],
  [2669, 2689, "B", "t"], [2753, 2773, "B", "t", "r"],
];

const L1 = [
  [1205, 1221, "", ""], [1629, 1645, "B", ""], [1647, 1667, "", ""], [1649, 1667, "B", ""],
  [1667, 1685, "B", ""], [1687, 1707, "", ""], [1687, 1705, "B", "", "r"], [1713, 1729, "B", "", "r"],
  [1733, 1749, "B", "", "r"], [1751, 1771, "", ""], [1751, 1769, "B", ""], [1771, 1787, "B", "", "r"],
  [1789, 1809, "", ""], [1791, 1809, "B", "", "r"], [1813, 1831, "B", "", "r"], [1833, 1853, "", ""],
  [1839, 1857, "B", "", "r"], [1897, 1915, "", ""], [2525, 2543, "B", "s"], [2581, 2601, "B", "s"],
  [2669, 2689, "B", "s"], [2753, 2773, "B", "s"],
];

const L0 = [
  [1649, 1667, "", ""], [1687, 1707, "", ""], [1751, 1771, "", ""], [1791, 1809, "", "", "r"], [1833, 1853, "", ""],
];

// [left, right, label, kind or start of the waiting part, its end]; kind "o" waits for its whole length
const SCHEDULE = [
  [
    [762, 769, "", "t"], [767, 861, "For12 (#"], [860, 879, "F"], [878, 897, "B"], [895, 901, "", "k"],
    [899, 906, "", "t"], [904, 908, "", "k"], [906, 1031, "For15 (#950"], [1029, 1129, "BB196 (#6", 1120, 1127],
    [1127, 1147, "B"], [1145, 1167, "B"], [1165, 1185, "B"], [1183, 1197, "I"], [1195, 1201, "", "k"],
    [1199, 1205, ""], [1203, 1207, "", "k"], [1205, 1211, ""], [1209, 1224, "F"], [1222, 1225, "", "k"],
    [1223, 1315, "BB227 (#"], [1313, 1333, "B"], [1336, 1339, "", "k"], [1337, 1359, "B"], [1357, 1379, "B"], [1377, 1383, ""],
    [1399, 1403, "", "k"], [1401, 1411, "I"], [1409, 1422, "F"], [1421, 1429, "", "k"], [1427, 1433, ""],
    [1447, 1451, "", "k"], [1449, 1461, "E", "o"], [1459, 1469, "E", "o"], [1467, 1481, "E", "o"], [1479, 1489, "E", "o"],
    [1503, 1519, "F"], [1517, 1535, "F"], [1533, 1551, "B", "o"], [1549, 1559, "I", "o"], [1557, 1561, "", "k"],
    [1559, 1591, "BB", 1582, 1589], [1619, 1641, "B"], [1659, 1679, "B"], [1677, 1699, "B"], [1697, 1709, "F"],
    [1707, 1713, ""], [1711, 1717, ""], [1715, 1721, ""], [1719, 1725, ""], [1723, 1733, "E", "o"],
    [1737, 1807, "For31"], [1805, 1809, "", "k"], [1807, 1818, "I"], [1816, 1819, "", "k"], [1817, 1825, ""],
    [1823, 1829, ""], [1827, 1833, ""], [1841, 1889, "For2"], [1887, 1935, "For2"], [1933, 1937, "", "k"],
    [1939, 1951, "E", "o"], [1949, 1953, "", "k"], [1957, 1960, "", "k"], [1958, 1965, ""],
    [1967, 1983, "F"], [1981, 1999, "F"], [1997, 2015, "F"], [2013, 2017, "", "k"], [2015, 2021, ""], [2019, 2023, "", "k"],
    [2031, 2041, "I", "o"], [2039, 2045, ""], [2043, 2063, "B", "o"], [2062, 2066, "", "k"], [2064, 2075, "E", "o"],
    [2073, 2081, "I", "o"], [2079, 2085, ""], [2083, 2089, ""], [2087, 2091, "", "k"], [2089, 2095, ""],
    [2093, 2097, "", "k"], [2095, 2105, "C", "t"],
  ],
  [
    [762, 768, ""], [766, 770, "", "k"], [768, 779, "E", "o"], [777, 789, "E", "o"], [787, 797, "I", "o"],
    [795, 801, "", "o"], [799, 807, "I", "o"], [805, 817, "E", "o"], [815, 825, "I", "o"], [823, 827, "", "k"],
    [825, 845, "F"], [843, 863, "F"], [861, 865, "", "k"], [897, 903, ""], [902, 905, "", "k"],
    [904, 1033, "For15 (#950"], [1031, 1131, "BB194 (#6", 1122, 1129], [1129, 1147, "F"], [1145, 1183, "BB1", 1166, 1181],
    [1181, 1201, "B"], [1199, 1207, ""], [1205, 1225, "F"], [1223, 1227, "", "k"], [1225, 1319, "BB225 (#1"],
    [1317, 1337, "B"], [1336, 1339, "", "k"], [1337, 1359, "B"], [1357, 1379, "B"], [1377, 1381, "", "k"],
    [1379, 1401, "B"], [1399, 1437, "BB2", 1420, 1435], [1435, 1443, "I", "o"], [1441, 1473, "BB", 1464, 1471],
    [1477, 1487, "I", "o"], [1485, 1491, ""], [1489, 1507, "B"], [1505, 1525, "B"], [1523, 1537, "E", "o"],
    [1541, 1553, "E", "o"], [1551, 1571, "B"], [1569, 1589, "B"], [1587, 1609, "B"], [1607, 1613, ""],
    [1619, 1639, "B"], [1637, 1641, "", "k"], [1639, 1663, "BB"], [1677, 1705, "BB", 1698, 1703],
    [1703, 1713, "I"], [1711, 1720, "", "k"], [1718, 1731, "E", "o"], [1729, 1741, "E", "o"], [1739, 1749, "E", "o"],
    [1747, 1756, "I", "o"], [1754, 1758, "", "k"], [1756, 1767, "F"], [1765, 1775, "E", "o"], [1773, 1783, "I", "o"],
    [1781, 1795, "E", "o"], [1793, 1799, "", "k"], [1797, 1805, ""], [1803, 1811, ""], [1809, 1817, ""],
    [1815, 1827, "F"], [1825, 1829, "", "k"], [1827, 1833, ""], [1831, 1835, "", "k"], [1833, 1843, "I", "o"],
    [1841, 1855, "E", "o"], [1853, 1897, "For3"], [1895, 1915, "Fo"], [1913, 1935, "B"],
    [1939, 1949, "I", "o"], [1947, 1959, "E", "o"], [1957, 1963, ""], [1961, 1965, "", "k"], [1963, 1977, "E", "o"],
    [1975, 1997, "B"], [1995, 2003, "I", "o"], [2001, 2013, "E", "o"], [2012, 2015, "", "k"], [2013, 2019, ""],
    [2021, 2031, "I", "o"], [2029, 2035, ""], [2033, 2042, "I", "o"], [2040, 2045, ""],
    [2059, 2065, ""], [2063, 2073, "I", "o"], [2071, 2081, "I", "o"], [2079, 2091, "E", "o"], [2089, 2093, "", "k"], [2091, 2097, ""],
  ],
  [
    [862, 871, "I", "o"], [869, 881, "I"], [903, 919, "F"], [917, 937, "F"], [1027, 1151, "BB195 (#62", 1120, 1149],
    [1149, 1169, "F"], [1179, 1227, "BB1", 1202, 1225], [1225, 1351, "BB226 (#10", 1318, 1349],
    [1349, 1375, "BB", 1368, 1373], [1373, 1395, "B"], [1399, 1421, "Fo"], [1423, 1429, "", "k"], [1427, 1449, "B"],
    [1447, 1453, "", "k"], [1451, 1463, "E", "o"], [1467, 1471, "", "k"], [1469, 1475, ""], [1473, 1483, "F"],
    [1481, 1487, ""], [1485, 1489, "", "k"], [1487, 1497, "I", "o"], [1495, 1507, "E", "o"], [1505, 1513, "I", "o"],
    [1511, 1525, "E", "o"], [1523, 1535, "E", "o"], [1533, 1545, "E", "o"], [1543, 1551, "I", "o"], [1549, 1571, "B"],
    [1569, 1581, "E", "o"], [1579, 1601, "B"], [1599, 1623, "BB"], [1621, 1643, "B"], [1659, 1681, "B"],
    [1697, 1711, "F"], [1709, 1719, "E", "o"], [1717, 1723, ""], [1721, 1731, "I", "o"], [1729, 1738, "I", "o"],
    [1736, 1745, "I", "o"], [1743, 1749, ""], [1797, 1805, ""], [1803, 1815, "F"], [1813, 1821, "F"], [1819, 1829, "I"],
    [1827, 1831, "", "k"], [1829, 1836, ""], [1834, 1845, "E", "o"], [1851, 1899, "For3"], [1913, 1943, "BB", 1934, 1941],
    [1941, 1949, "I", "o"], [1947, 1953, ""], [1951, 1961, "E", "o"], [1959, 1963, "", "k"], [1962, 1968, ""], [1966, 1971, ""],
    [1993, 2003, "I", "o"], [2001, 2015, "E", "o"], [2013, 2025, "E", "o"], [2023, 2031, "I", "o"], [2029, 2041, "E", "o"],
    [2039, 2043, "", "k"], [2041, 2054, "E", "o"], [2052, 2064, "E", "o"], [2062, 2071, "I", "o"], [2069, 2073, "", "k"],
    [2071, 2083, "E", "o"], [2081, 2089, "I", "o"], [2087, 2093, ""], [2091, 2097, ""],
  ],
];

/* ---------- parts ---------- */

function HtgBlock({ x1, x2, top, height = 128, head, sub, red, cores, badge, loop, fill, bold }) {
  let left = x1 - X0;
  let h = red ? height - 8 : height;
  return (
    <>
      <Block $fill={fill} style={{ left, top, width: x2 - x1, height: h }}>
        <BlockText $bold={bold}>{head || " "}</BlockText>
        {sub && <BlockText $sub>{sub}</BlockText>}
        {cores && (
          <Cores>
            {cores.split("").map((c, i) => (
              <Core key={i} $on={c === "1"} />
            ))}
          </Cores>
        )}
        {badge && (
          <Badge $fill={fill}>
            <Icon name="unknown" size={34} />
          </Badge>
        )}
        {loop && (
          <LoopCount>
            <Icon name="loop" size={38} />
            {loop}
          </LoopCount>
        )}
      </Block>
      {red && <RedBar style={{ left: left + 1, top: top + height - 6, width: x2 - x1 - 2 }} />}
    </>
  );
}

function TimeAxis({ start, step, weight }) {
  return (
    <Axis>
      {LABELS.map((label, i) => (
        <Tick key={label} $w={weight} style={{ left: Math.round(start - X0 + i * step) }}>
          {label}
        </Tick>
      ))}
    </Axis>
  );
}

function GridLines({ start, step, weight }) {
  return LABELS.map((label, i) => (
    <GridLine key={label} $w={weight} style={{ left: Math.round(start - X0 + i * step) }} />
  ));
}

function HierarchyChart() {
  return (
    <ChartFrame>
      <Canvas $height={900} $line="#000">
        <GridLines start={636} step={152.1} weight={1} />
        {[L0, L1, L2, L3].map((row, level) =>
          row.map(([x1, x2, head, sub, red, cores, badge, loop], i) => (
            <HtgBlock
              key={`${level}-${i}`}
              {...{ x1, x2, head, sub, red, cores, badge, loop }}
              top={LEVEL[level]}
            />
          ))
        )}
        <HtgBlock x1={645} x2={2865} top={421} fill="g" head="Block1 (#139)" sub="AVES_TAWS" cores="111" bold />
        <HtgBlock x1={637} x2={643} top={555} fill="t" red />
        <HtgBlock
          x1={645}
          x2={2879}
          top={555}
          fill="t"
          head="CALL14 (#2258)  (AVES_TAWS_scenario.c, lines 1558-1564)"
          sub="AVES_TAWS(&navTAWSAlertState_data, &navTAWSVisualAlert_data, &navETAWSstatus_data, &navTAWSTerrPBOffIndicator_data, &navTAWSTerrPBFaultIndicator_data,"
          cores="111"
        />
        <HtgBlock x1={635} x2={2887} top={689} height={126} fill="g" head="Block1 (#2239)" sub="main" cores="111" badge bold />
      </Canvas>
      <TimeAxis start={635} step={152.1} weight={2} />
    </ChartFrame>
  );
}

function ScheduleChart() {
  return (
    <ChartFrame $grow>
      <Canvas $line="#000080">
        <GridLines start={760} step={143.55} weight={4} />
        <CoreLabels>
          {SCHEDULE.map((_, i) => (
            <CoreLabel key={i}>Tricore #{i}</CoreLabel>
          ))}
        </CoreLabels>
        {SCHEDULE.map((row, r) =>
          row.map(([x1, x2, label, kind, end], i) => {
            let from = kind === "o" ? x1 + 4 : kind;
            let to = kind === "o" ? x2 - 2 : end;
            return (
              <Block
                key={`${r}-${i}`}
                $fill={kind === "t" || kind === "k" ? kind : "b"}
                style={{ left: x1 - X0, top: 53 + r * 296, width: x2 - x1, height: 250 }}
              >
                {to && <Orange style={{ left: from - x1 - 2, width: to - from }} />}
                {label && <TaskText>{label}</TaskText>}
              </Block>
            );
          })
        )}
        <Deadline>Sequential program</Deadline>
      </Canvas>
      <TimeAxis start={760} step={143.55} weight={4} />
    </ChartFrame>
  );
}

function FlowSection({ icon, title, items }) {
  let [open, setOpen] = useState(true);
  return (
    <div>
      <SectionHead type="button" aria-expanded={open} onClick={() => setOpen(!open)}>
        <Icon name={icon} />
        {title}
        <Icon name={open ? "foldUp" : "foldDown"} size={17} />
      </SectionHead>
      {open &&
        items.map(([name, label, mark, off]) => (
          <FlowItem key={label} type="button" disabled={off}>
            <Icon name={name} size={30} />
            {mark && (
              <Mark $open={mark === "?"} $off={off}>
                {mark}
              </Mark>
            )}
            {label}
          </FlowItem>
        ))}
    </div>
  );
}

function Group({ title, initial = false, children }) {
  let [open, setOpen] = useState(initial);
  return (
    <div>
      <GroupHead type="button" aria-expanded={open} onClick={() => setOpen(!open)}>
        {title}
        <Icon name={open ? "foldUp" : "foldDown"} size={16} />
      </GroupHead>
      {open && <GroupBody>{children}</GroupBody>}
    </div>
  );
}

function App() {
  return (
    <Window>
      <GlobalStyle />
      <TitleBar>
        <Icon name="brandDark" />
        <Title>
          runtime-EclipseApplication - terrain_awareness/generated_files/scheduled_terrain_awareness.gecosproject - emmtrix
          Parallel Studio
        </Title>
        <WindowButton aria-label="Minimize window"><Icon name="winMin" size={20} /></WindowButton>
        <WindowButton aria-label="Restore window"><Icon name="winRestore" size={20} /></WindowButton>
        <WindowButton aria-label="Close window"><Icon name="winClose" size={20} /></WindowButton>
      </TitleBar>
      <MenuBar>
        {MENU.map((m) => (
          <button key={m}>{m}</button>
        ))}
      </MenuBar>
      <ToolBar>
        {TOOLS.map((t, i) => {
          if (t === "|") return <Grip key={i} />;
          if (t === "/") return <Divider key={i} />;
          if (t === "v" || t === "w") return <Caret key={i} $off={t === "w"} aria-label="More" />;
          return (
            <ToolButton key={i} aria-label={t}>
              <Icon name={t} />
            </ToolButton>
          );
        })}
        <Spacer />
        <SearchButton aria-label="Search"><Icon name="search" /></SearchButton>
        <Grip />
        <ToolButton aria-label="Open perspective"><Icon name="perspective" size={30} /></ToolButton>
        <Divider />
        <ToolButton aria-label="Project perspective"><Icon name="copyFiles" /></ToolButton>
        <ToolButton aria-label="ePS perspective" $on><Icon name="brand" /></ToolButton>
      </ToolBar>
      <Body>
        <FlowView>
          <TabRow>
            <Tab>
              <Icon name="brand" />
              ePS Flow
              <Icon name="close" size={26} />
            </Tab>
            <TabRest>
              <Tab>
                <Icon name="copyFiles" />
                Project Explorer
              </Tab>
              <ViewButtons>
                <Icon name="more" size={27} />
                <Icon name="minimize" size={19} />
                <Icon name="maximize" size={19} />
              </ViewButtons>
            </TabRest>
          </TabRow>
          <FlowForm>
            <FieldLabel htmlFor="project">Active Project:</FieldLabel>
            <SelectBox>
              <Select id="project" $bg="#e1e1e1">
                <option>terrain_awareness</option>
              </Select>
              <Icon name="chevron" size={16} />
            </SelectBox>
            <FieldLabel htmlFor="platform" $indent>
              Current Platform:
            </FieldLabel>
            <PlatformInput id="platform" readOnly value="Aurix TC297 Starter Kit" />
            <FlowTools>
              {FLOW_TOOLS.map((t) => (
                <ToolButton key={t} type="button" aria-label={t} $on={t === "alert"} $tint="#bcdcf4">
                  <Icon name={t} />
                </ToolButton>
              ))}
            </FlowTools>
            <FlowList>
              {FLOW.map(([icon, title, items]) => (
                <FlowSection key={title} icon={icon} title={title} items={items} />
              ))}
            </FlowList>
          </FlowForm>
        </FlowView>
        <Editor>
          <TabRow>
            <Tab $bg="#fff">
              <Icon name="editor" />
              HTG Schedule Editor
              <Icon name="close" size={26} />
            </Tab>
            <TabRest $right>
              <ViewButtons $end={17}>
                <Icon name="minimize" size={19} />
                <Icon name="maximize" size={19} />
              </ViewButtons>
            </TabRest>
          </TabRow>
          <EditorBody>
            <Charts>
              <HierarchyChart />
              <ScheduleChart />
            </Charts>
            <SideTools>
              {SIDE_TOOLS.map((t, i) =>
                t === "-" ? (
                  <Rule key={i} />
                ) : (
                  <ToolButton key={i} aria-label={t.replace("*", "")} $on={t.endsWith("*")}>
                    <Icon name={t.replace("*", "")} size={30} />
                  </ToolButton>
                )
              )}
            </SideTools>
            <Inspector>
              <SelectBox>
                <Select aria-label="Procedure" $bg="linear-gradient(90deg, #fff calc(100% - 36px), #e1e1e1 0)">
                  <option>main</option>
                </Select>
                <Icon name="chevron" size={16} />
              </SelectBox>
              <Groups>
                <Group title="Procedure Call Graph" initial>
                  <Tree>
                    <TreeNode>
                      <Icon name="chevronRight" size={20} />
                      <span>main</span>
                    </TreeNode>
                  </Tree>
                </Group>
                <Group title="Schedule Selection" />
                <Group title="Runtime Ratio" />
                <Group title="Transformation Stack" />
                <Group title="Debug" />
              </Groups>
            </Inspector>
          </EditorBody>
        </Editor>
        <Trim>
          <TrimGrip />
          {["restore", "monitor", "marks", "problems", "table"].map((t, i) => (
            <ToolButton key={t} aria-label={t}>
              <Icon name={t} size={i ? 30 : 18} />
            </ToolButton>
          ))}
        </Trim>
      </Body>
      <StatusBar>
        <Grip />
        <Icon name="layers" size={20} />
      </StatusBar>
    </Window>
  );
}

export default App;
